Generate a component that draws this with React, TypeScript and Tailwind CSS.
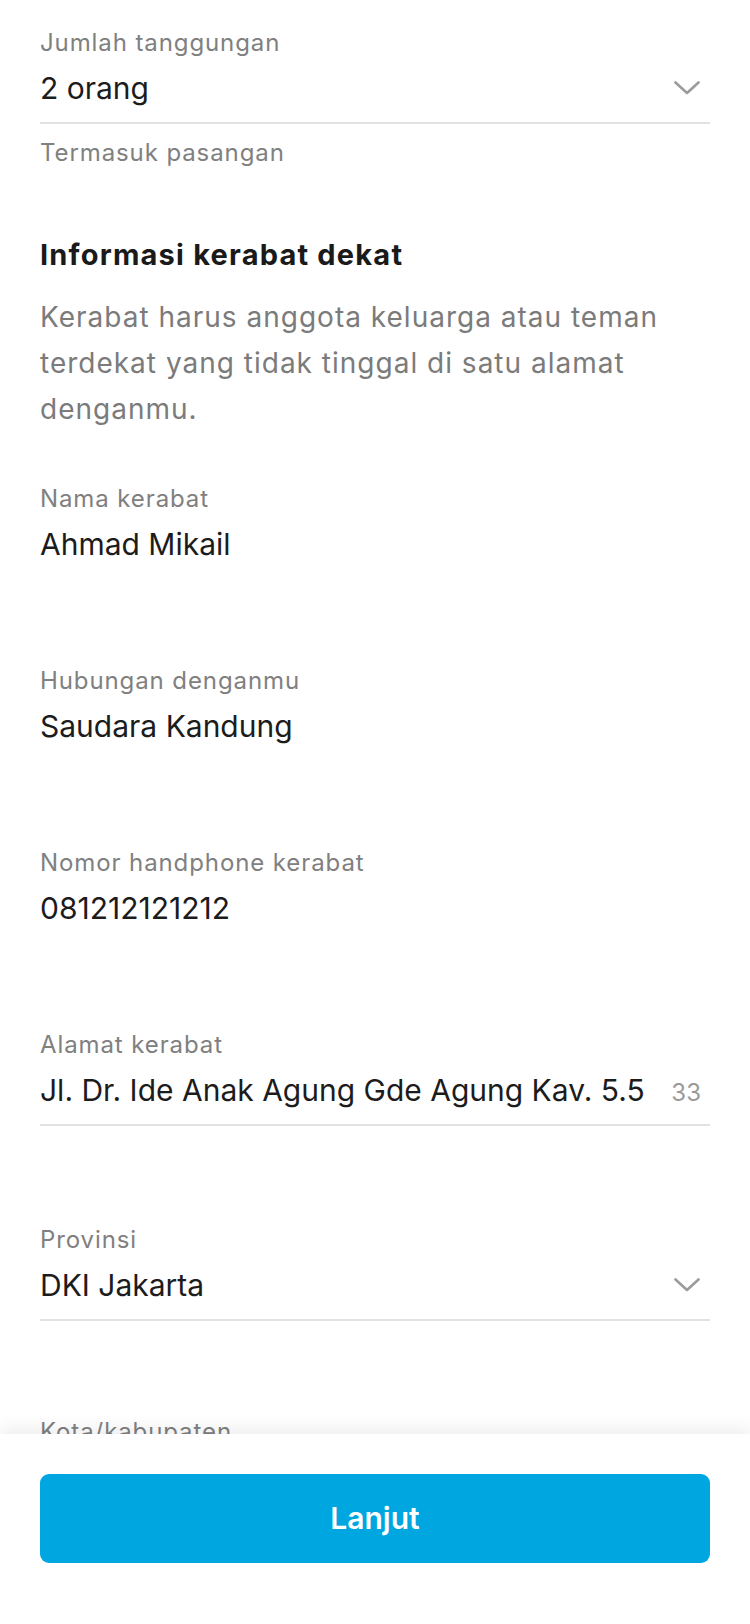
import React from 'react';

interface FieldProps {
  label: string;
  value: string;
  select?: boolean;
  counter?: string;
  underline?: boolean;
  className?: string;
}

function Chevron() {
  return (
    <svg width="26" height="14" viewBox="0 0 26 14" fill="none" className="mr-[10px] shrink-0">
      <polyline points="1.5,1.5 13,12 24.5,1.5" stroke="#9b9b9b" strokeWidth="2.6" strokeLinecap="round" strokeLinejoin="round" />
    </svg>
  );
}

function Field({ label, value, select, counter, underline, className }: FieldProps) {
  return (
    <div className={className}>
      <div className="text-[24px] leading-8 tracking-[0.9px] text-[#808080]">{label}</div>
      <div className="mt-[9px] flex h-10 items-center justify-between gap-4">
        <span className="truncate whitespace-nowrap text-[30px] leading-10 text-[#1c1c1c]">{value}</span>
        {select && <Chevron />}
        {counter && (
          <span className="mr-[9px] mt-[6px] shrink-0 text-[24px] leading-8 text-[#9a9a9a]">{counter}</span>
        )}
      </div>
      <div className={`mt-[14px] h-[2px] ${underline ? 'bg-[#e2e2e2]' : 'bg-transparent'}`} />
    </div>
  );
}

export default function App() {
  return (
    <div className="relative h-[1624px] overflow-hidden bg-white font-['Inter','Noto_Sans',sans-serif]">
      <div className="px-10 pt-[27px]">
        <Field label="Jumlah tanggungan" value="2 orang" select underline />
        <div className="mt-[13px] text-[24px] leading-8 tracking-[0.9px] text-[#808080]">Termasuk pasangan</div>

        <h2 className="mt-[68px] text-[29px] font-bold leading-9 tracking-[1.2px] text-[#1a1a1a]">
          Informasi kerabat dekat
        </h2>
        <p className="mt-[21px] text-[28px] leading-[46px] tracking-[1px] text-[#7b7b7b]">
          Kerabat harus anggota keluarga atau teman terdekat yang tidak tinggal di satu alamat denganmu.
        </p>

        <Field className="mt-[51px]" label="Nama kerabat" value="Ahmad Mikail" />
        <Field className="mt-[85px]" label="Hubungan denganmu" value="Saudara Kandung" />
        <Field className="mt-[85px]" label="Nomor handphone kerabat" value="081212121212" />
        <Field className="mt-[85px]" label="Alamat kerabat" value="Jl. Dr. Ide Anak Agung Gde Agung Kav. 5.5" counter="33" underline />
        <Field className="mt-[98px]" label="Provinsi" value="DKI Jakarta" select underline />
        <Field className="mt-[95px]" label="Kota/kabupaten" value="Jakarta Selatan" select underline />
      </div>

      <div className="absolute inset-x-0 bottom-0 h-[190px] bg-white px-10 pt-10 shadow-[0_-6px_16px_rgba(0,0,0,0.07)]">
        <button className="flex h-[89px] w-full items-center justify-center rounded-[9px] bg-[#00a6e0] text-[30px] font-semibold text-white">
          Lanjut
        </button>
      </div>
    </div>
  );
}
